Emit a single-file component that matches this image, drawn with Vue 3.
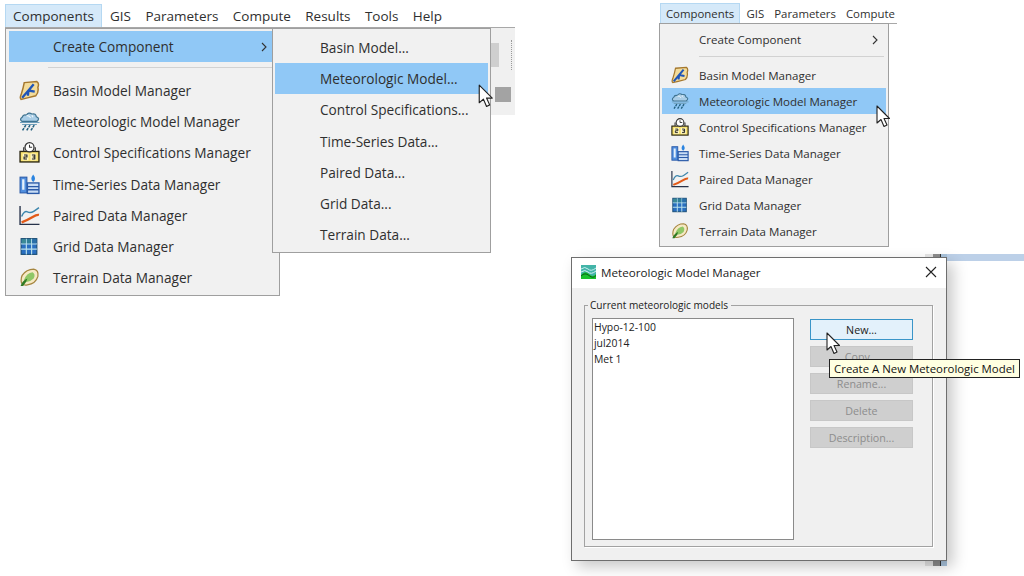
<script setup>
const bar = ['GIS', 'Parameters', 'Compute', 'Results', 'Tools', 'Help']
const barRight = ['GIS', 'Parameters', 'Compute']
const managers = [
  { icon: 'basin', label: 'Basin Model Manager' },
  { icon: 'met', label: 'Meteorologic Model Manager' },
  { icon: 'control', label: 'Control Specifications Manager' },
  { icon: 'series', label: 'Time-Series Data Manager' },
  { icon: 'paired', label: 'Paired Data Manager' },
  { icon: 'grid', label: 'Grid Data Manager' },
  { icon: 'terrain', label: 'Terrain Data Manager' }
]
const sub = ['Basin Model...', 'Meteorologic Model...', 'Control Specifications...', 'Time-Series Data...', 'Paired Data...', 'Grid Data...', 'Terrain Data...']
const models = ['Hypo-12-100', 'jul2014', 'Met 1']
const buttons = ['Copy...', 'Rename...', 'Delete', 'Description...']
</script>

<template>
  <div class="stage">
    <svg class="defs" width="0" height="0">
      <symbol id="i-basin" viewBox="0 0 20 20">
        <path d="M5 2.500 L17 1.500 Q19.500 3 18 7 Q19 12 16 15 L8 17 L2 18.500 Q0.500 17 2 14 Q4 8 5 2.500Z" fill="#f3dc9b" stroke="#a5782e" stroke-width="1.400"/>
        <path d="M3 17 L9 10 L14 4 M9 10 L15 11 M9 10 L8.500 15" fill="none" stroke="#1f55b8" stroke-width="2.200"/>
      </symbol>
      <symbol id="i-met" viewBox="0 0 20 20">
        <path d="M3 10 Q0 8 3 6 Q4 3 7 4 Q9 0.500 12.500 3 Q16 2 16.500 5.500 Q20.500 7 17 10Z" fill="#a9cde6" stroke="#3f7390" stroke-width="1.200"/>
        <path d="M7 4.500 Q10 4 11 6.500 M12.500 3.500 Q12 5 13.500 6" fill="none" stroke="#eef6fb" stroke-width="1"/>
        <path d="M1 11 H19.500 M3 12.800 H17" stroke="#6f9fbb" stroke-width="1"/>
        <path d="M6.500 13.500 L3 19 M10.500 13.500 L7 19 M14.500 13.500 L11 19" stroke="#24607f" stroke-width="1.500" stroke-dasharray="2.500 .8"/>
      </symbol>
      <symbol id="i-control" viewBox="0 0 20 20">
        <rect x="1" y="9" width="18" height="10" fill="#f8e26f" stroke="#2b2712" stroke-width="1.300"/>
        <path d="M4.500 9 V5 M15.500 9 V5" stroke="#3a3a3a" stroke-width="1.200"/>
        <circle cx="10" cy="5" r="4.300" fill="#fff" stroke="#333" stroke-width="1.200"/>
        <path d="M10 2.500 V5 H12.500" fill="none" stroke="#333" stroke-width="1"/>
        <rect x="3.500" y="11" width="5.500" height="6.500" fill="#fff7c4"/>
        <rect x="11" y="11" width="5.500" height="6.500" fill="#fff7c4"/>
        <path d="M4.800 12.300 H7.600 V14.200 H4.800 V16.200 H7.600 M12.300 12.300 H15.100 V16.200 H12.300 M13 14.200 H15.100" fill="none" stroke="#1a1a1a" stroke-width="1"/>
      </symbol>
      <symbol id="i-series" viewBox="0 0 20 20">
        <rect x="1" y="3" width="6.500" height="15" fill="#4f8ede" stroke="#2a5aa8" stroke-width="1"/>
        <rect x="3" y="5" width="2.200" height="10" fill="#e4f0fb"/>
        <path d="M13.500 0.500 Q17 5 13.500 7.500 Q10 5 13.500 0.500Z" fill="#2b84e0"/>
        <rect x="8" y="8.500" width="11" height="10" fill="#c9ddf5" stroke="#2a5aa8" stroke-width="1.300"/>
        <path d="M8 12 H19 M8 15 H19" stroke="#2a5aa8" stroke-width="1.200"/>
      </symbol>
      <symbol id="i-paired" viewBox="0 0 20 20">
        <path d="M1 1 V18.500 H19.500" fill="none" stroke="#26324a" stroke-width="1.300"/>
        <path d="M2.500 11 Q5 5 8 6.500 T14 6 T19 2.500" fill="none" stroke="#3d86ad" stroke-width="1.400"/>
        <path d="M2.500 16.500 Q9 14 13 11.500 T19 9.500" fill="none" stroke="#e25a18" stroke-width="2.200"/>
      </symbol>
      <symbol id="i-grid" viewBox="0 0 20 20">
        <rect x="2" y="2.500" width="15" height="15" fill="#2a6fc0" stroke="#174a70" stroke-width="1"/>
        <path d="M7 2.500 V17.500 M12 2.500 V17.500 M2 7.500 H17 M2 12.500 H17" stroke="#b8e0ea" stroke-width="1.100"/>
        <rect x="2.500" y="3" width="4" height="4" fill="#3b8a94"/>
        <rect x="7.500" y="3" width="4" height="4" fill="#2f7f96"/>
        <rect x="12.500" y="3" width="4" height="4" fill="#2a70a8"/>
      </symbol>
      <symbol id="i-terrain" viewBox="0 0 20 20">
        <path d="M3 8 Q7 2 14 2 Q19 3 18 9 Q16 16 8 17 Q2 18 2 13 Q2 10 3 8Z" fill="#f6e9c4" stroke="#a5853f" stroke-width="1.200"/>
        <path d="M5 12 Q7 6 13 5 Q16 7 14 11 Q10 15 5 14Z" fill="#8fc766"/>
        <path d="M1.500 18 Q3 13 8 11 Q7 15 4 18Z" fill="#2f7a24"/>
      </symbol>
      <symbol id="i-cursor" viewBox="0 0 14 23">
        <path d="M1 1 V18 L5 14.500 L8 21.500 L11 20 L8 13.500 H13.500Z" fill="#fff" stroke="#222" stroke-width="1.100" stroke-linejoin="round"/>
      </symbol>
      <symbol id="i-app" viewBox="0 0 15 14">
        <rect width="15" height="14" fill="#43b4a8"/>
        <path d="M0 4 Q4 1 7 4 T15 3" fill="none" stroke="#c8eef0" stroke-width="1"/>
        <path d="M0 7 Q4 4 7 7 T15 6" fill="none" stroke="#d8f2f0" stroke-width="1"/>
        <path d="M0 10 Q4 5 8 9 T15 9 V14 H0Z" fill="#19c22a"/>
        <path d="M0 11 Q4 7 8 10.500 T15 10.500" fill="none" stroke="#0b5f1a" stroke-width="1"/>
      </symbol>
      <symbol id="i-chev" viewBox="0 0 6 10">
        <path d="M1 1 L5 5 L1 9" fill="none" stroke="#333" stroke-width="1.100"/>
      </symbol>
    </svg>

    <!-- Left capture -->
    <div class="backdrop"><span class="thumb"></span><span class="dots"></span><span class="square"></span></div>
    <nav class="bar bar-l">
      <span class="bar-on">Components</span>
      <span v-for="b in bar" :key="b" class="bar-item">{{ b }}</span>
    </nav>
    <div class="menu menu-l">
      <div class="row row-on first"><span class="gutter"></span><span class="label">Create Component</span><svg class="chev"><use href="#i-chev" /></svg></div>
      <div class="sep"></div>
      <div v-for="m in managers" :key="m.label" class="row">
        <span class="gutter"><svg class="ico"><use :href="'#i-' + m.icon" /></svg></span>
        <span class="label">{{ m.label }}</span>
      </div>
    </div>
    <div class="menu submenu">
      <div v-for="(s, i) in sub" :key="s" class="row" :class="{ 'row-on': i === 1 }"><span class="label">{{ s }}</span></div>
    </div>
    <svg class="cursor cur-a"><use href="#i-cursor" /></svg>

    <!-- Right capture -->
    <nav class="bar bar-r">
      <span class="bar-on">Components</span>
      <span v-for="b in barRight" :key="b" class="bar-item">{{ b }}</span>
    </nav>
    <div class="menu menu-r">
      <div class="row first"><span class="gutter"></span><span class="label">Create Component</span><svg class="chev"><use href="#i-chev" /></svg></div>
      <div class="sep"></div>
      <div v-for="m in managers" :key="m.label" class="row" :class="{ 'row-on': m.icon === 'met' }">
        <span class="gutter"><svg class="ico"><use :href="'#i-' + m.icon" /></svg></span>
        <span class="label">{{ m.label }}</span>
      </div>
    </div>
    <svg class="cursor cur-b"><use href="#i-cursor" /></svg>

    <!-- Dialog -->
    <div class="strip"></div>
    <div class="behind"><i class="b-light"></i><i class="b-gray"></i><i class="b-dark"></i><i class="b-blue"></i></div>
    <section class="dialog">
      <header class="title">
        <svg class="app"><use href="#i-app" /></svg>
        <span class="title-text">Meteorologic Model Manager</span>
        <svg class="close" viewBox="0 0 12 12"><path d="M1 1 L11 11 M11 1 L1 11" stroke="#222" stroke-width="1.100" /></svg>
      </header>
      <div class="body">
        <fieldset class="group">
          <legend>Current meteorologic models</legend>
          <ul class="list">
            <li v-for="m in models" :key="m">{{ m }}</li>
          </ul>
          <div class="actions">
            <button class="btn btn-on">New...</button>
            <button v-for="b in buttons" :key="b" class="btn">{{ b }}</button>
          </div>
        </fieldset>
      </div>
    </section>
    <svg class="cursor cur-c"><use href="#i-cursor" /></svg>
    <div class="tip">Create A New Meteorologic Model</div>
  </div>
</template>

<style scoped>
.stage {
  position: relative;
  width: 1024px;
  height: 576px;
  overflow: hidden;
  background: #fff;
  font-family: "Open Sans", "Noto Sans", sans-serif;
  color: #2f2f2f;
}
.defs { position: absolute; }

.backdrop {
  position: absolute;
  left: 440px; top: 28px;
  width: 75px; height: 87px;
  background: #f0f0f0;
}
.thumb { position: absolute; left: 50px; top: 15px; width: 9px; height: 24px; background: #cfcfcf; }
.dots { position: absolute; left: 71px; top: 12px; height: 30px; border-left: 1px dotted #9a9a9a; }
.square { position: absolute; left: 55px; top: 59px; width: 16px; height: 15px; background: #a3a3a3; }

.bar { position: absolute; display: flex; align-items: center; box-sizing: border-box; white-space: nowrap; overflow: hidden; background: #fff; }
.bar > span { flex: none; }
.bar-l { left: 5px; top: 4px; width: 510px; height: 24px; font-size: 13.5px; border-bottom: 1px solid #a8a8a8; }
.bar-l .bar-on { width: 97px; height: 23px; }
.bar-l .bar-item { padding: 0 7.200px; }
.bar-l .bar-on + .bar-item { padding-left: 8px; }
.bar-r { left: 660px; top: 3px; width: 237px; height: 21px; font-size: 11.4px; border-bottom: 1px solid #a8a8a8; }
.bar-r .bar-on { width: 80px; height: 20px; }
.bar-r .bar-item { padding: 0 5px; }
.bar-r .bar-on + .bar-item { padding-left: 6.500px; }
.bar-on {
  display: flex; align-items: center; justify-content: center;
  box-sizing: border-box;
  background: #d5e9f9;
  border: 1px solid #b5d8f2;
  border-bottom: 0;
}

.menu {
  position: absolute;
  box-sizing: border-box;
  background: #f1f1f1;
  border: 1px solid #9f9f9f;
  white-space: nowrap;
}
.row { display: flex; align-items: center; }
.row-on { background: #90c8f6; }
.gutter { display: flex; justify-content: center; flex: none; }
.label { flex: 1; }
.sep { height: 1px; background: #d2d2d2; }
.chev { flex: none; width: 6px; height: 10px; }

.menu-l { left: 5px; top: 28px; width: 275px; height: 268px; padding: 2px; font-size: 13.65px; }
.menu-l .row { height: 31.170px; margin-right: 3px; }
.menu-l .first { height: 31px; margin-right: -2px; margin-left: 1px; }
.menu-l .gutter { width: 43px; margin-right: 2px; }
.menu-l .first .gutter { width: 42px; margin-right: 2px; }
.menu-l .ico { width: 21px; height: 21px; }
.menu-l .sep { margin: 5px 5px 7px 40px; }
.menu-l .chev { margin-right: 12px; }

.submenu { left: 272px; top: 28px; width: 219px; height: 225px; padding: 3px 2px; font-size: 13.65px; }
.submenu .row { height: 31.170px; padding-left: 45px; }

.menu-r { left: 659px; top: 23px; width: 230px; height: 224px; padding: 2px; font-size: 11.55px; }
.menu-r .row { height: 26px; }
.menu-r .first { height: 27px; }
.menu-r .gutter { width: 35px; margin-right: 2px; }
.menu-r .ico { width: 18px; height: 18px; }
.menu-r .sep { margin: 3px 2px 5px 37px; }
.menu-r .chev { margin-right: 8px; }

.cursor { position: absolute; width: 14px; height: 23px; }
.cur-a { left: 478px; top: 84px; width: 15px; height: 24px; }
.cur-b { left: 876px; top: 105px; }
.cur-c { left: 826px; top: 332px; }

.strip { position: absolute; left: 940px; top: 254px; width: 84px; height: 7px; background: #bcd0e8; }
.behind { position: absolute; left: 925px; top: 254px; width: 22px; height: 312px; display: flex; }
.behind i { display: block; height: 100%; }
.b-light { width: 8px; background: #e6e6e6; }
.b-gray { width: 7px; background: #8d8d8d; }
.b-dark { width: 1px; background: #333; }
.b-blue { width: 6px; background: #a9c3dc; }

.dialog {
  position: absolute;
  left: 571px; top: 257px;
  width: 376px; height: 304px;
  box-sizing: border-box;
  display: flex; flex-direction: column;
  background: #f0f0f0;
  border: 1px solid #6e6e6e;
  box-shadow: 6px 6px 14px rgba(0, 0, 0, .22);
}
.title {
  display: flex; align-items: center;
  height: 30px; flex: none;
  box-sizing: border-box;
  padding: 0 9px 2px 9px;
  background: #fff;
  font-size: 11.65px;
  color: #222;
}
.app { width: 15px; height: 14px; flex: none; }
.title-text { flex: 1; margin-left: 5px; }
.close { width: 12px; height: 12px; flex: none; }
.body { flex: 1; display: flex; padding: 12px 13px 13px 12px; min-height: 0; }
.group {
  flex: 1; margin: 0; min-width: 0;
  display: flex; gap: 16px;
  box-sizing: border-box;
  padding: 7px 19px 6px 7px;
  border: 1px solid #a2a2a2;
  box-shadow: 1px 1px 0 #fff;
}
.group legend { padding: 0 3px 0 2px; margin-left: -4px; font-size: 10.100px; line-height: 11px; color: #222; }
.list {
  width: 202px; margin: 0; padding: 0 0 0 1px;
  box-sizing: border-box;
  list-style: none;
  background: #fff;
  border: 1px solid #8a8a8a;
  font-size: 10.400px;
  line-height: 16px;
  color: #222;
}
.actions { display: flex; flex-direction: column; gap: 6px; width: 103px; padding-top: 1px; }
.btn {
  height: 21px;
  padding: 0;
  box-sizing: border-box;
  font: inherit;
  font-size: 10.700px;
  color: #8d8d8d;
  background: #cfcfcf;
  border: 1px solid #c7c7c7;
}
.btn-on { background: #e3f1fb; border-color: #3a95c8; color: #222; }

.tip {
  position: absolute;
  left: 829px; top: 359px;
  box-sizing: border-box;
  width: 191px; height: 19px;
  display: flex; align-items: center; justify-content: center;
  background: #ffffe1;
  border: 1px solid #222;
  font-size: 11.400px;
  color: #111;
  white-space: nowrap;
}
</style>
